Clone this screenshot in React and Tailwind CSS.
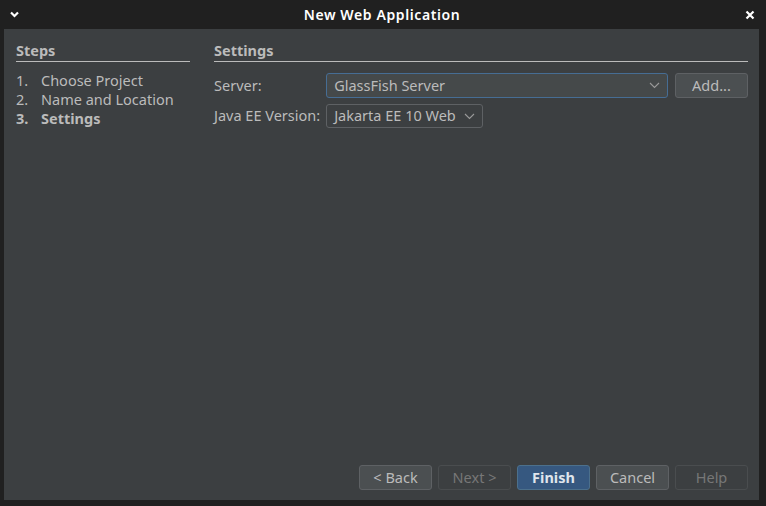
import React from 'react';

const STEPS = [
  { n: '1.', label: 'Choose Project' },
  { n: '2.', label: 'Name and Location' },
  { n: '3.', label: 'Settings', current: true },
];

function Chevron({ className = '' }) {
  return (
    <svg width="11" height="7" viewBox="0 0 11 7" className={className}>
      <path d="M1 1l4.5 4.5L10 1" fill="none" stroke="#9a9a9a" strokeWidth="1.1" />
    </svg>
  );
}

function Button({ children, primary, disabled }) {
  return (
    <button
      className={`w-[73px] h-[25px] rounded-[3px] border text-[14.5px] ${
        primary
          ? 'bg-[#365880] border-[#4c708c] text-[#dfe5ec] font-bold'
          : disabled
          ? 'bg-[#3c3f41] border-[#4a4d4f] text-[#777777]'
          : 'bg-[#4b4f51] border-[#5e6164] text-[#bbbbbb]'
      }`}
    >
      {children}
    </button>
  );
}

export default function App() {
  return (
    <div className="w-[766px] h-[506px] bg-[#202020] flex flex-col text-[#bbbbbb] font-['Noto_Sans',sans-serif] overflow-hidden">
      {/* title bar */}
      <div className="h-[29px] shrink-0 flex items-center justify-between px-[10px] text-white">
        <svg width="9" height="7" viewBox="0 0 9 7">
          <path d="M1 1.5l3.5 3.5L8 1.5" fill="none" stroke="white" strokeWidth="2.2" />
        </svg>
        <span className="text-[14px] font-semibold tracking-[0.6px]">New Web Application</span>
        <svg width="10" height="10" viewBox="0 0 10 10" className="mr-[1px]">
          <path d="M1.5 1.5l7 7M8.5 1.5l-7 7" stroke="white" strokeWidth="2.2" />
        </svg>
      </div>

      {/* body */}
      <div className="flex-1 ml-[4px] mr-[7px] mb-[6px] bg-[#3c3f41] flex flex-col pl-[12px] pr-[11px] pt-[12px] pb-[10px] text-[14.5px]">
        <div className="flex-1 flex gap-[24px]">
          <div className="w-[174px]">
            <div className="font-bold leading-[19px] pb-[1px] border-b border-[#bbbbbb]">Steps</div>
            <div className="mt-[9px] leading-[19px]">
              {STEPS.map(s => (
                <div key={s.n} className={`flex ${s.current ? 'font-bold' : ''}`}>
                  <span className="w-[25px]">{s.n}</span>
                  <span>{s.label}</span>
                </div>
              ))}
            </div>
          </div>

          <div className="flex-1">
            <div className="font-bold leading-[19px] pb-[1px] border-b border-[#bbbbbb]">Settings</div>
            <div className="mt-[11px] grid grid-cols-[auto_1fr] gap-x-[6px] gap-y-[6px] items-center">
              <span>Server:</span>
              <div className="flex gap-[7px]">
                <div className="flex-1 h-[25px] rounded-[3px] border border-[#466d94] bg-[#45494a] flex items-center justify-between pl-[7px] pr-[7px]">
                  <span>GlassFish Server</span>
                  <Chevron />
                </div>
                <Button>Add...</Button>
              </div>
              <span>Java EE Version:</span>
              <div>
                <div className="w-[157px] h-[24px] rounded-[3px] border border-[#5e6164] bg-[#3c3f41] flex items-center justify-between pl-[7px] pr-[7px]">
                  <span>Jakarta EE 10 Web</span>
                  <Chevron />
                </div>
              </div>
            </div>
          </div>
        </div>

        <div className="flex justify-end gap-[6px]">
          <Button>&lt; Back</Button>
          <Button disabled>Next &gt;</Button>
          <Button primary>Finish</Button>
          <Button>Cancel</Button>
          <Button disabled>Help</Button>
        </div>
      </div>
    </div>
  );
}
